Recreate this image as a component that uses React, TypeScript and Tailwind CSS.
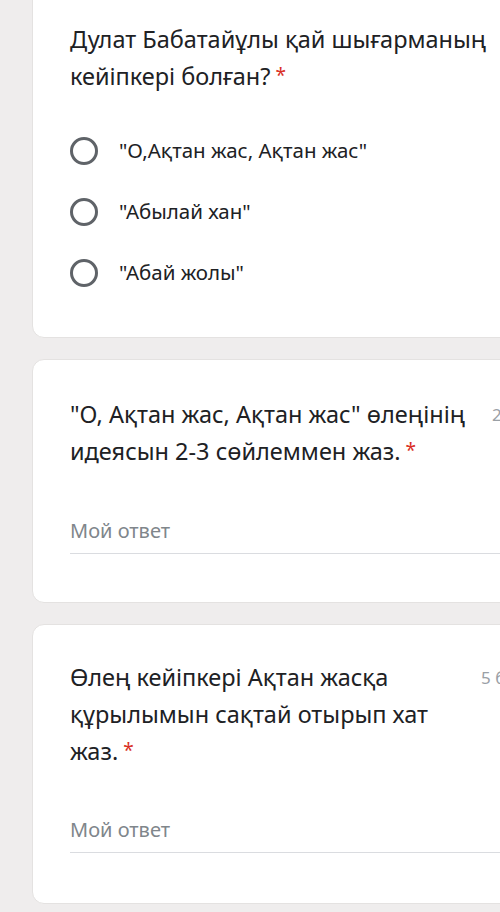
import React from 'react';

const font = { fontFamily: '"Noto Sans", Roboto, sans-serif' };

const Star = () => <span className="text-[#d93025] text-[19px] leading-none align-[3px]"> *</span>;

const Radio = ({ label }: { label: string }) => (
  <div className="flex items-center h-[61px]">
    <span className="w-[28px] h-[28px] rounded-full border-[3px] border-[#5f6368] shrink-0" />
    <span className="ml-[21px] text-[20.5px] text-[#202124]">{label}</span>
  </div>
);

const Answer = () => (
  <div>
    <div className="text-[20px] text-[#80868b] pb-[7px]">Мой ответ</div>
    <div className="h-px bg-[#dadce0]" />
  </div>
);

export default function App() {
  return (
    <div className="w-[500px] h-[912px] overflow-hidden bg-[#efeded]" style={font}>
      <div className="w-[540px] ml-[32px] -mt-[20px] flex flex-col gap-[21px]">
        {/* question 1 */}
        <div className="bg-white rounded-[12px] border border-[#e4e2e1] pl-[37px] pt-[40px] pb-[34px]">
          <div className="text-[23.5px] leading-[37px] text-[#202124] w-[440px]">
            Дулат Бабатайұлы қай шығарманың кейіпкері болған?<Star />
          </div>
          <div className="mt-[25px]">
            <Radio label={'"О,Ақтан жас, Ақтан жас"'} />
            <Radio label={'"Абылай хан"'} />
            <Radio label={'"Абай жолы"'} />
          </div>
        </div>

        {/* question 2 */}
        <div className="bg-white rounded-[12px] border border-[#e4e2e1] pl-[37px] pt-[36px] pb-[48px]">
          <div className="flex">
            <div className="text-[23.5px] leading-[37px] text-[#202124] w-[412px]">
              "О, Ақтан жас, Ақтан жас" өлеңінің идеясын 2-3 сөйлеммен жаз.<Star />
            </div>
            <div className="ml-[10px] text-[17px] leading-[37px] text-[#9aa0a6]">2 балл</div>
          </div>
          <div className="mt-[46px]">
            <Answer />
          </div>
        </div>

        {/* question 3 */}
        <div className="bg-white rounded-[12px] border border-[#e4e2e1] pl-[37px] pt-[34px] pb-[50px]">
          <div className="flex">
            <div className="text-[23.5px] leading-[37px] text-[#202124] w-[372px]">
              Өлең кейіпкері Ақтан жасқа құрылымын сақтай отырып хат жаз.<Star />
            </div>
            <div className="ml-[39px] text-[17px] leading-[37px] text-[#9aa0a6]">5 балл</div>
          </div>
          <div className="mt-[45px]">
            <Answer />
          </div>
        </div>
      </div>
    </div>
  );
}
